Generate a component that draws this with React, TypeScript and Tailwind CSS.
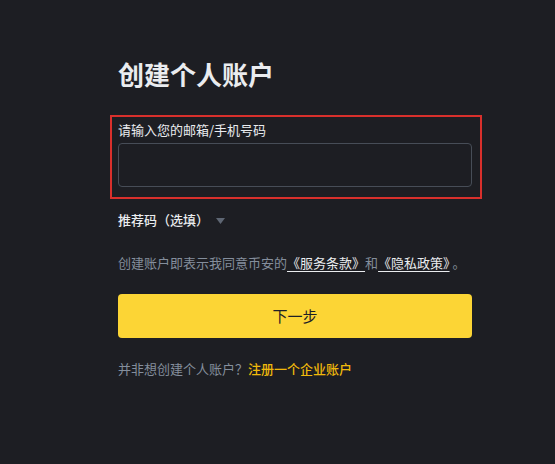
export default function App() {
    return (
        <div className="min-h-[464px] w-full bg-[#1d1e23] pl-[118px] pt-[56px] font-['Noto_Sans_CJK_SC',sans-serif]">
            <div className="w-[354px]">
                <h1 className="text-[26px] leading-[36px] font-bold text-[#eaecef]">创建个人账户</h1>

                {/* highlighted field */}
                <div className="mt-[23px] -ml-2 w-[372px] border-2 border-[#d9302c] pl-[6px] pr-2 pt-[3px] pb-[10px]">
                    <label className="block text-[13px] leading-5 text-[#eaecef]">请输入您的邮箱/手机号码</label>
                    <div className="mt-[3px] h-[44px] rounded-[4px] border border-[#474d57] bg-[#1d1e23]" />
                </div>

                <div className="mt-[11px] flex items-center gap-[7px] text-[13px] leading-5 font-medium text-[#eaecef]">
                    <span>推荐码（选填）</span>
                    <svg width="9" height="6" viewBox="0 0 9 6" className="mt-[1px]">
                        <path d="M0 0h9L4.5 6z" fill="#5e6673" />
                    </svg>
                </div>

                <p className="mt-[23px] text-[13px] leading-5 text-[#848e9c]">
                    创建账户即表示我同意币安的
                    <a className="text-[#eaecef] underline underline-offset-[3px]">《服务条款》</a>
                    和
                    <a className="text-[#eaecef] underline underline-offset-[3px]">《隐私政策》</a>
                    <span className="ml-[3px]">。</span>
                </p>

                <button className="mt-[21px] flex h-[44px] w-full items-center justify-center rounded-[4px] bg-[#fcd535] text-[15px] text-[#1e2026]">
                    下一步
                </button>

                <p className="mt-[21px] text-[13px] leading-5 text-[#848e9c]">
                    并非想创建个人账户？
                    <a className="font-medium text-[#f0b90b]">注册一个企业账户</a>
                </p>
            </div>
        </div>
    )
}
